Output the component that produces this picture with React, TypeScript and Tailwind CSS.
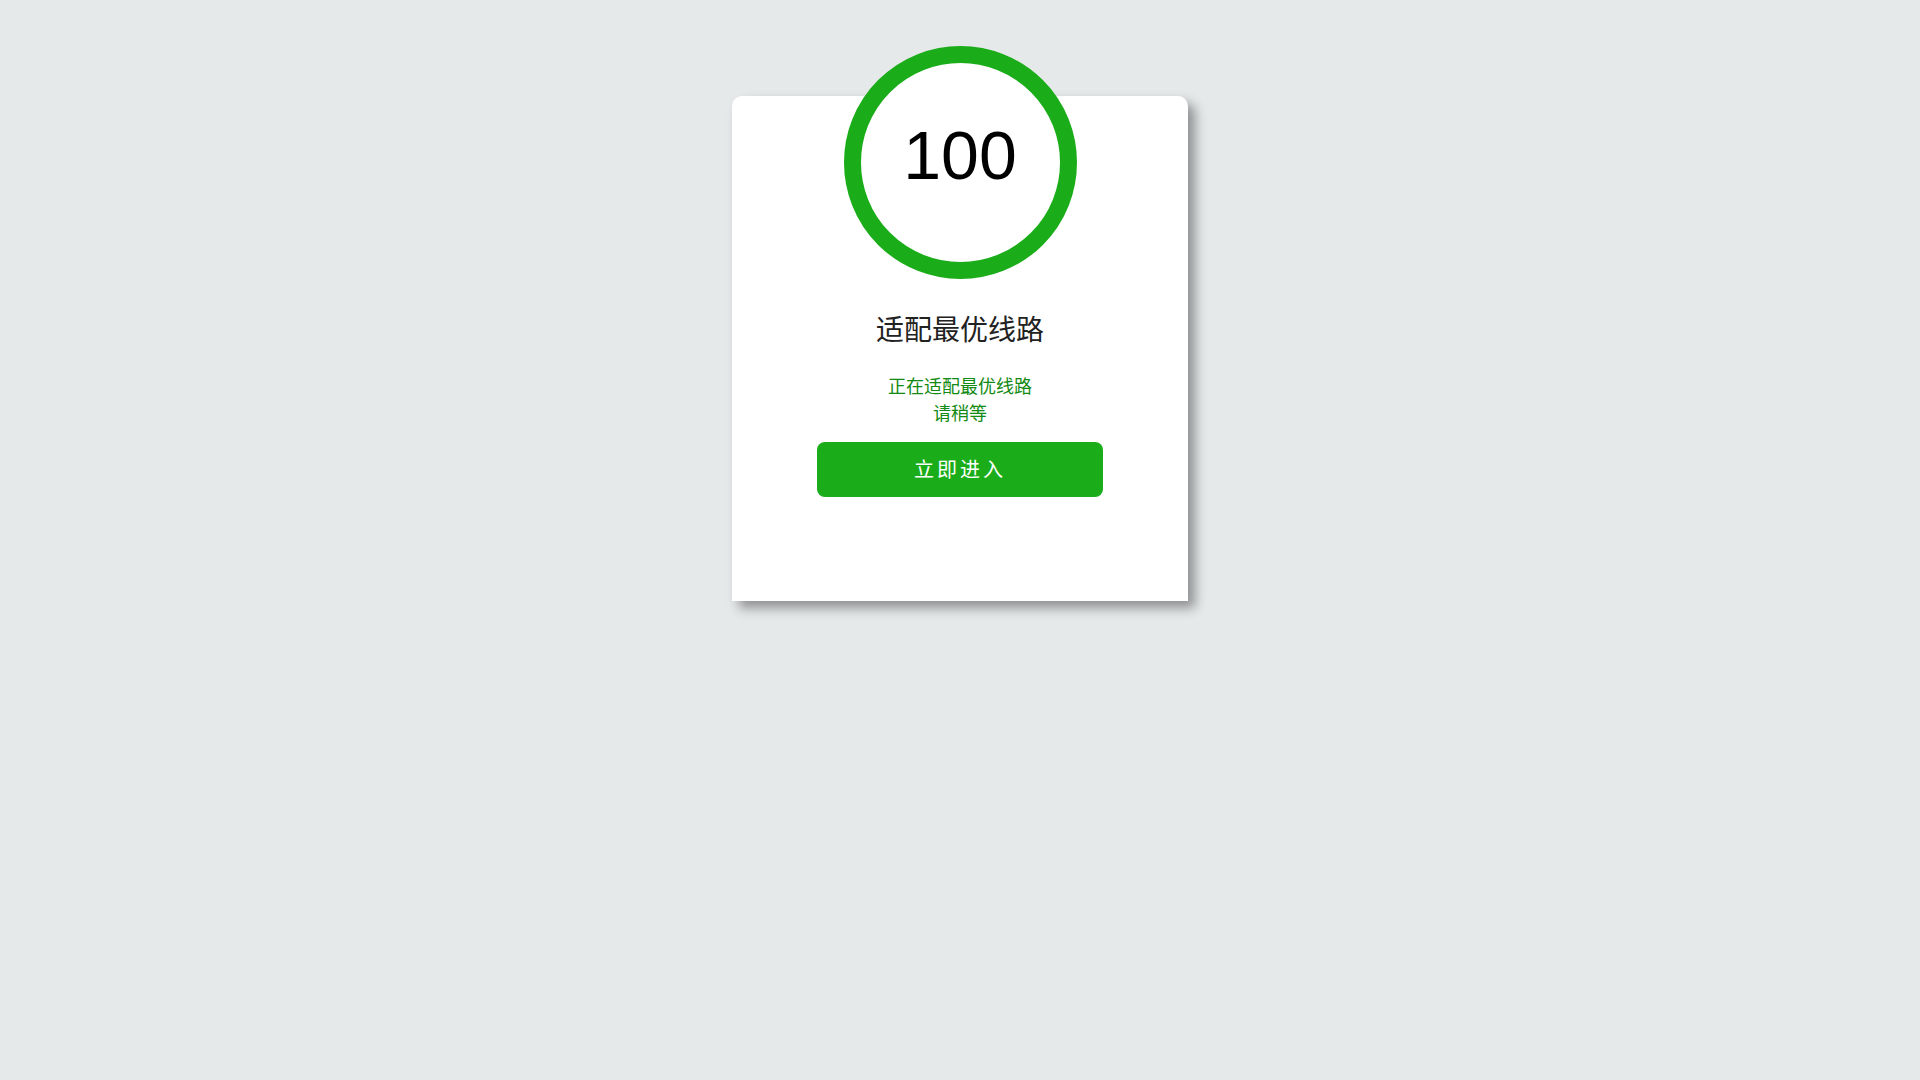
export default function App() {
  return (
    <div
      className="min-h-screen w-full bg-[#e5e9ea] pt-[96px]"
      style={{ fontFamily: '"Liberation Sans", "Noto Sans CJK SC", sans-serif' }}
    >
      <div className="mx-auto flex w-[456px] flex-col items-center rounded-t-[10px] bg-white pb-[104px] shadow-[7px_7px_12px_rgba(0,0,0,0.38)]">
        <div className="-mt-[50px] h-[233px] w-[233px] rounded-full border-[17px] border-[#1aad19] bg-white">
          <div className="pt-[58px] text-center text-[68px] leading-none text-black">100</div>
        </div>
        <div className="mt-[32px] text-[28px] leading-[40px] text-[#222]">适配最优线路</div>
        <div className="mt-[23px] text-center text-[18px] leading-[27px] text-[#138a13]">
          <div>正在适配最优线路</div>
          <div>请稍等</div>
        </div>
        <button className="mt-[14px] h-[55px] w-[286px] rounded-[8px] bg-[#1aad19] text-[20px] tracking-[3px] text-white">
          立即进入
        </button>
      </div>
    </div>
  );
}
